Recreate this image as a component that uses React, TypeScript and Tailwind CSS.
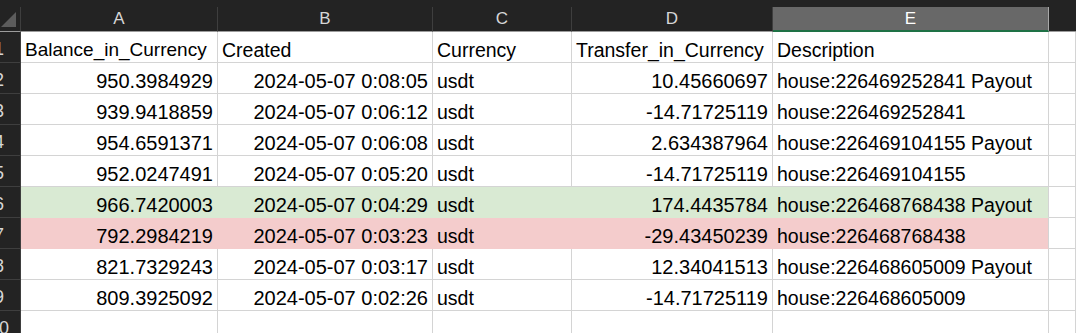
import React from 'react';

type Row = {
  n: number;
  bal: string;
  created: string;
  cur: string;
  amt: string;
  desc: string;
  tone?: 'green' | 'red';
};

const rows: Row[] = [
  { n: 2, bal: '950.3984929', created: '2024-05-07 0:08:05', cur: 'usdt', amt: '10.45660697', desc: 'house:226469252841 Payout' },
  { n: 3, bal: '939.9418859', created: '2024-05-07 0:06:12', cur: 'usdt', amt: '-14.71725119', desc: 'house:226469252841' },
  { n: 4, bal: '954.6591371', created: '2024-05-07 0:06:08', cur: 'usdt', amt: '2.634387964', desc: 'house:226469104155 Payout' },
  { n: 5, bal: '952.0247491', created: '2024-05-07 0:05:20', cur: 'usdt', amt: '-14.71725119', desc: 'house:226469104155' },
  { n: 6, bal: '966.7420003', created: '2024-05-07 0:04:29', cur: 'usdt', amt: '174.4435784', desc: 'house:226468768438 Payout', tone: 'green' },
  { n: 7, bal: '792.2984219', created: '2024-05-07 0:03:23', cur: 'usdt', amt: '-29.43450239', desc: 'house:226468768438', tone: 'red' },
  { n: 8, bal: '821.7329243', created: '2024-05-07 0:03:17', cur: 'usdt', amt: '12.34041513', desc: 'house:226468605009 Payout' },
  { n: 9, bal: '809.3925092', created: '2024-05-07 0:02:26', cur: 'usdt', amt: '-14.71725119', desc: 'house:226468605009' },
];

const toneCls = {
  none: 'bg-white border-[#d4d4d4]',
  green: 'bg-[#d9ead3] border-[#d9ead3]',
  red: 'bg-[#f4cccc] border-[#f4cccc]',
};

// row numbers are centred in a wider header that the crop cuts off on the left
const RowHead = ({ n }: { n: number }) => (
  <div className="h-[31px] bg-[#232323] border-r border-b border-[#3e3e3e] overflow-hidden flex items-end pb-[2px]">
    <div className="w-[40px] shrink-0 -ml-[21px] text-center text-[18px] leading-[22px] text-[#d6d6d6]">{n}</div>
  </div>
);

const Cell = ({
  children,
  right,
  tone = 'none',
  edge,
  size = 'text-[20px]',
}: {
  children?: React.ReactNode;
  right?: boolean;
  tone?: 'none' | 'green' | 'red';
  edge?: boolean;
  size?: string;
}) => (
  <div
    className={`h-[31px] border-r border-b flex items-end pb-[1px] px-[4px] whitespace-nowrap overflow-hidden leading-[22px] text-black ${size} ${
      right ? 'justify-end' : 'justify-start'
    } ${toneCls[tone]} ${edge ? 'border-r-[#d4d4d4]' : ''}`}
  >
    {children}
  </div>
);

const ColHead = ({ label, selected }: { label: string; selected?: boolean }) =>
  selected ? (
    <div className="h-[25px] bg-[#686868] border-r border-r-[#a8a8a8] border-b-2 border-b-[#1e7145] flex items-center justify-center text-[17px] text-white">
      {label}
    </div>
  ) : (
    <div className="h-[25px] bg-[#232323] border-r border-r-[#3e3e3e] border-b border-b-[#9c9c9c] flex items-center justify-center text-[17px] text-[#d6d6d6]">
      {label}
    </div>
  );

export default function App() {
  return (
    <div className="w-[1076px] h-[333px] overflow-hidden bg-white font-['Liberation_Sans',Arial,sans-serif]">
      <div className="h-[7px] bg-[#232323]" />
      <div className="grid grid-cols-[21px_197px_215px_139px_201px_276px_1fr]">
        <div className="h-[25px] bg-[#232323] border-r border-r-[#3e3e3e] border-b border-b-[#9c9c9c] flex items-end">
          <svg width="20" height="24" viewBox="0 0 20 24" className="block">
            <polygon points="1,20 16,5 16,20" fill="#5c5c5c" />
          </svg>
        </div>
        <ColHead label="A" />
        <ColHead label="B" />
        <ColHead label="C" />
        <ColHead label="D" />
        <ColHead label="E" selected />
        <div className="h-[25px] bg-[#232323] border-b border-b-[#9c9c9c]" />

        <RowHead n={1} />
        <Cell size="text-[19px]">Balance_in_Currency</Cell>
        <Cell size="text-[19.5px]">Created</Cell>
        <Cell size="text-[19.5px]">Currency</Cell>
        <Cell size="text-[19.5px]">Transfer_in_Currency</Cell>
        <Cell size="text-[19.5px]">Description</Cell>
        <Cell />

        {rows.map((r) => {
          const t = r.tone ?? 'none';
          return (
            <React.Fragment key={r.n}>
              <RowHead n={r.n} />
              <Cell right tone={t}>{r.bal}</Cell>
              <Cell right tone={t}>{r.created}</Cell>
              <Cell tone={t} size="text-[19.5px]">{r.cur}</Cell>
              <Cell right tone={t}>{r.amt}</Cell>
              <Cell tone={t} edge size="text-[19.5px]">{r.desc}</Cell>
              <Cell />
            </React.Fragment>
          );
        })}

        <RowHead n={10} />
        <Cell />
        <Cell />
        <Cell />
        <Cell />
        <Cell />
        <Cell />
      </div>
    </div>
  );
}
